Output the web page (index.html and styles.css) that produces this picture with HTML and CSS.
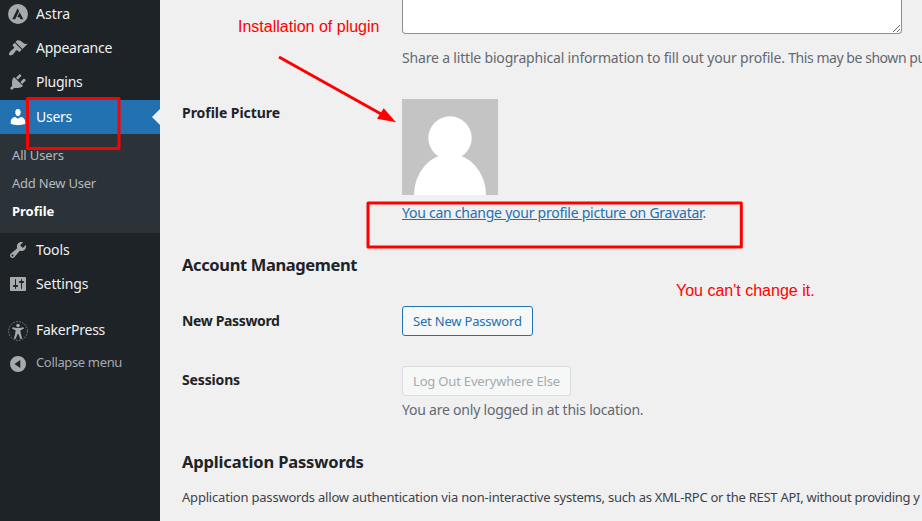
FILE: index.html
```html
<!DOCTYPE html>
<html lang="en">
<head>
<meta charset="utf-8">
<title>Profile</title>
<link rel="stylesheet" href="styles.css">
</head>
<body>
<div class="layout">
  <nav class="sidebar">
    <a class="item astra"><svg class="icon" viewBox="0 0 20 20"><path fill-rule="evenodd" d="M10 0a10 10 0 1 0 0 20a10 10 0 0 0 0-20zM9.600 4.200l1.500 3.100L7.200 15.200H4.300zM11.600 8.300l3.700 6.900h-2.800l-.9-1.900H9.200z"/></svg><span>Astra</span></a>
    <a class="item appearance"><svg class="icon" viewBox="0 0 20 20"><path d="M14.48 11.06L7.41 3.99l1.5-1.5c.5-.56 2.3-.47 3.51.32 1.21.8 1.43 1.28 2.91 2.1 1.18.64 2.45 1.26 4.45.85zm-.71.71L6.7 4.7 4.93 6.47c-.39.39-.39 1.02 0 1.41l1.06 1.06c.39.39.39 1.03 0 1.42-.6.6-1.43 1.11-2.21 1.69-.35.26-.7.53-1.01.84C1.43 14.23.4 16.08 1.4 17.07c.99 1 2.84-.03 4.18-1.36.31-.31.58-.66.85-1.02.57-.78 1.08-1.61 1.69-2.21.39-.39 1.02-.39 1.41 0l1.06 1.06c.39.39 1.02.39 1.41 0z"/></svg><span>Appearance</span></a>
    <a class="item plugins"><svg class="icon" viewBox="0 0 20 20"><path d="M13.11 4.36L9.87 7.6 8 5.73l3.24-3.24c.35-.34 1.05-.2 1.56.32.52.51.66 1.21.31 1.55zm-8 1.77l.91-1.12 9.01 9.01-1.19.84c-.71.71-2.63 1.16-3.82 1.16H6.14L4.9 17.26c-.59.59-1.54.59-2.12 0-.59-.58-.59-1.53 0-2.12l1.24-1.24v-3.88c0-1.13.4-3.19 1.09-3.89zm7.26 3.97l3.24-3.24c.34-.35 1.04-.21 1.55.31.52.51.66 1.21.31 1.55l-3.24 3.25z"/></svg><span>Plugins</span></a>
    <a class="item current"><svg class="icon" viewBox="0 0 20 20"><path d="M10 9.25c-2.27 0-2.73-3.44-2.73-3.44C7 4.02 7.82 2 9.97 2c2.16 0 2.98 2.02 2.71 3.81 0 0-.41 3.44-2.68 3.44zm0 2.57L12.72 10c2.39 0 4.52 2.33 4.52 4.53v2.49s-3.65 1.13-7.24 1.13c-3.65 0-7.24-1.13-7.24-1.13v-2.49c0-2.25 1.94-4.48 4.47-4.48z"/></svg><span>Users</span></a>
    <div class="submenu">
      <a class="sub all">All Users</a>
      <a class="sub add">Add New User</a>
      <a class="sub active">Profile</a>
    </div>
    <a class="item tools"><svg class="icon" viewBox="0 0 20 20"><path d="M16.68 9.77c-1.34 1.34-3.3 1.67-4.95.99l-5.41 6.52c-.99.99-2.59.99-3.58 0s-.99-2.59 0-3.57l6.52-5.42c-.68-1.65-.35-3.61.99-4.95 1.28-1.28 3.12-1.62 4.72-1.06l-2.89 2.89 2.82 2.82 2.86-2.87c.53 1.58.18 3.39-1.08 4.65zM3.81 16.21c.4.39 1.04.39 1.43 0 .4-.4.4-1.04 0-1.43-.39-.4-1.03-.4-1.43 0-.39.39-.39 1.03 0 1.43z"/></svg><span>Tools</span></a>
    <a class="item settings"><svg class="icon" viewBox="0 0 20 20"><path d="M18 16V4c0-.55-.45-1-1-1H3c-.55 0-1 .45-1 1v12c0 .55.45 1 1 1h14c.55 0 1-.45 1-1zM8 11h1c.55 0 1 .45 1 1s-.45 1-1 1H8v1.500c0 .28-.22.5-.5.5s-.5-.22-.5-.5V13H6c-.55 0-1-.45-1-1s.45-1 1-1h1V5.500c0-.28.22-.5.5-.5s.5.22.5.5V11zm5-2h-1c-.55 0-1-.45-1-1s.45-1 1-1h1V5.500c0-.28.22-.5.5-.5s.5.22.5.5V7h1c.55 0 1 .45 1 1s-.45 1-1 1h-1v5.500c0 .28-.22.5-.5.5s-.5-.22-.5-.5V9z"/></svg><span>Settings</span></a>
    <a class="item faker"><svg class="icon" viewBox="0 0 20 20"><circle class="dashes" cx="10" cy="10" r="9.400"/><circle cx="10" cy="4.600" r="1.800"/><path d="M4.600 6.200l3.800.9h3.200l3.800-.9.400 1.500-3.400 1.500.3 3 1.400 5.200-1.700.5L10.400 13h-.8L7.600 17.900l-1.700-.5 1.400-5.200.3-3-3.400-1.500z"/></svg><span>FakerPress</span></a>
    <a class="item collapse"><svg class="icon" viewBox="0 0 20 20"><path fill-rule="evenodd" d="M10 2a8 8 0 1 0 0 16a8 8 0 0 0 0-16zM12.300 6v8L6.500 10z"/></svg><span>Collapse menu</span></a>
  </nav>
  <main class="content">
    <div class="row bio">
      <div class="field">
        <textarea class="bio-input"></textarea>
        <p class="description share">Share a little biographical information to fill out your profile. <span class="tight">This may be shown pu</span></p>
      </div>
    </div>
    <div class="row picture">
      <div class="label l-picture">Profile Picture</div>
      <div class="field">
        <svg class="avatar" viewBox="0 0 96 96"><path class="backdrop" d="M0 0h96v96H0z"/><circle cx="48" cy="39" r="21.700"/><ellipse cx="48" cy="96" rx="36" ry="41"/></svg>
        <p class="description gravatar"><a>You can change your profile picture on Gravatar</a>.</p>
      </div>
    </div>
    <h2 class="account">Account Management</h2>
    <div class="row password">
      <div class="label l-password">New Password</div>
      <button class="button b-password">Set New Password</button>
    </div>
    <div class="row sessions">
      <div class="label l-sessions">Sessions</div>
      <div class="field">
        <button class="button b-logout" disabled>Log Out Everywhere Else</button>
        <p class="description location">You are only logged in at this location.</p>
      </div>
    </div>
    <h2 class="application">Application Passwords</h2>
    <p class="intro">Application passwords allow authentication via non-interactive systems, <span class="tight">such as XML-RPC or the REST API, without providing y</span></p>
  </main>
</div>
<svg class="marks" viewBox="0 0 922 521">
  <rect x="27.500" y="98.500" width="91.500" height="50"/>
  <rect x="368" y="203" width="373.300" height="44"/>
  <path class="shaft" d="M279 57L382 114.500"/>
  <path class="head" d="M396 122.300L383.700 108.300L377 118.700z"/>
</svg>
<div class="note note-install">Installation of plugin</div>
<div class="note note-change">You can't change it.</div>
</body>
</html>
```
FILE: styles.css
```css
* { box-sizing: border-box; }
body {
  margin: 0;
  height: 521px;
  overflow: hidden;
  position: relative;
  background: #f0f0f1;
  font-family: "Noto Sans", sans-serif;
  font-size: 14px;
  color: #1d2327;
}
p, h2 { margin: 0; }
.layout { display: flex; height: 521px; overflow: hidden; }

.sidebar { width: 160px; flex: none; background: #1d2327; white-space: nowrap; }
.item {
  display: flex;
  align-items: center;
  height: 34px;
  padding-left: 8px;
  gap: 8px;
  color: #f0f0f1;
  letter-spacing: -0.25px;
}
.item span { padding-bottom: 2px; }
.icon { width: 20px; height: 20px; flex: none; fill: #a7aaad; }
.astra { margin-top: -3px; letter-spacing: 0; }
.tools, .settings { letter-spacing: -0.1px; }
.current { margin-top: 1px; background: #2271b1; color: #fff; position: relative; }
.current .icon { fill: #fff; }
.current::after {
  content: "";
  position: absolute;
  right: 0;
  top: 9px;
  border: 8px solid transparent;
  border-left-width: 0;
  border-right-color: #f0f0f1;
}
.submenu { background: #2c3338; padding: 7px 0 8px; }
.sub { display: block; height: 28px; line-height: 28px; padding-left: 12px; font-size: 13px; color: #b5b9bc; }
.all { letter-spacing: -0.15px; }
.add { letter-spacing: -0.23px; }
.sub.active { color: #fff; font-weight: 700; }
.faker { margin-top: 12px; }
.faker .icon { margin-top: 2px; }
.dashes { fill: none; stroke: #8a9095; stroke-width: .8; stroke-dasharray: 1.8 1.2; }
.collapse { height: 32px; font-size: 13px; color: #a7aaad; letter-spacing: -0.35px; }
.collapse .icon { margin-top: 2px; }

.content { flex: none; width: 762px; padding-left: 22px; overflow: hidden; white-space: nowrap; }
.row { display: grid; grid-template-columns: 220px 1fr; align-items: start; }
.bio .field { grid-column: 2; }
.bio { height: 99px; }
.bio-input {
  display: block;
  width: 500px;
  height: 34px;
  border: 1px solid #8c8f94;
  border-top: 0;
  border-radius: 0 0 4px 4px;
  background: #fff;
  resize: vertical;
}
.description { line-height: 20px; color: #646970; }
.share { margin-top: 14px; letter-spacing: -0.18px; }
.share .tight { letter-spacing: -0.45px; }
.picture { height: 156px; }
.label { font-weight: 700; line-height: 28px; }
.l-picture { letter-spacing: -0.05px; }
.l-password { letter-spacing: -0.35px; padding-top: 1px; }
.l-sessions { letter-spacing: -0.15px; }
.avatar { display: block; width: 96px; height: 96px; fill: #fff; }
.backdrop { fill: #c4c4c4; }
.gravatar { margin-top: 8px; letter-spacing: -0.25px; }
.gravatar a { color: #2271b1; text-decoration: underline; }
h2 { font-size: 16.5px; line-height: 20px; font-weight: 700; }
.account { letter-spacing: -0.37px; }
.application { letter-spacing: -0.15px; }
.password { margin-top: 31px; height: 60px; }
.sessions { height: 86px; }
.button {
  justify-self: start;
  height: 30px;
  padding: 0 10px;
  border: 1px solid #2271b1;
  border-radius: 3px;
  background: #f6f7f7;
  color: #2271b1;
  font: 13px "Noto Sans", sans-serif;
  text-align: left;
}
.b-password { width: 131px; letter-spacing: -0.2px; }
.b-logout { display: block; width: 169px; letter-spacing: -0.18px; color: #a7aaad; border-color: #dcdcde; }
.location { margin-top: 4px; letter-spacing: -0.22px; }
.intro { margin-top: 15px; font-size: 13px; line-height: 20px; letter-spacing: -0.2px; color: #3c434a; }
.intro .tight { letter-spacing: -0.27px; }

.marks { position: absolute; left: 0; top: 0; width: 922px; height: 521px; fill: none; stroke: #f00; stroke-width: 3; stroke-linejoin: round; }
.head { fill: #f00; stroke: none; }
.note { position: absolute; color: #f00; font: 16px/18px "Liberation Sans", sans-serif; white-space: nowrap; }
.note-install { left: 238px; top: 18px; }
.note-change { left: 676px; top: 282px; }
```
